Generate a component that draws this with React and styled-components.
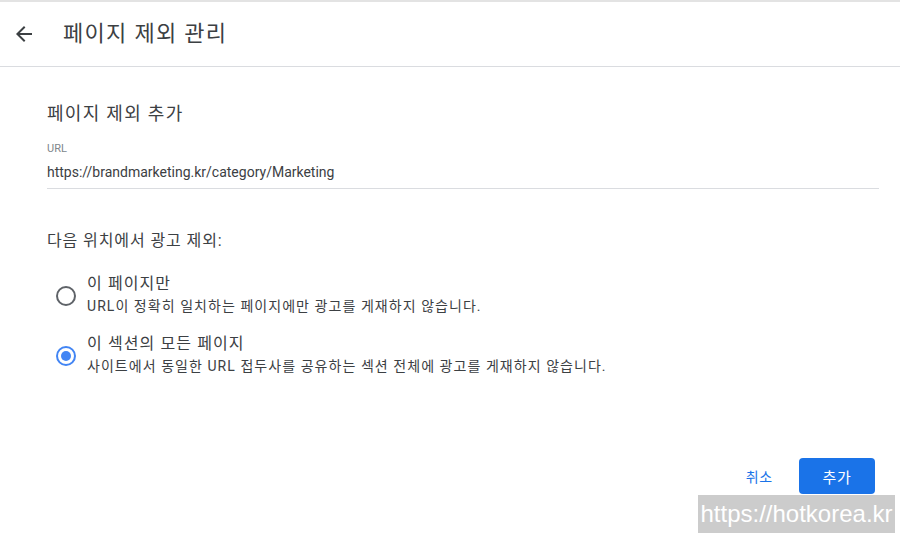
import React, { useState } from 'react'
import styled, { createGlobalStyle } from 'styled-components'

const GlobalStyle = createGlobalStyle`
  html, body {
    margin: 0;
    padding: 0;
    background: #ffffff;
  }
  body {
    font-family: Roboto, "Noto Sans CJK KR", sans-serif;
    color: #3c4043;
  }
`

const Page = styled.div`
  width: 900px;
  height: 536px;
  position: relative;
  overflow: hidden;
  border-top: 2px solid #e3e3e3;
  box-sizing: border-box;
`

const Header = styled.header`
  display: flex;
  align-items: center;
  height: 64px;
  border-bottom: 1px solid #dadce0;
  padding-left: 12px;
`

const BackButton = styled.button`
  display: flex;
  align-items: center;
  justify-content: center;
  width: 24px;
  height: 24px;
  padding: 0;
  border: none;
  background: none;
  color: #3c4043;
  margin-right: 27px;
`

const Title = styled.h1`
  margin: 0;
  font-size: 22px;
  font-weight: 400;
  line-height: 28px;
  color: #3c4043;
  letter-spacing: 1.3px;
`

const Body = styled.main`
  padding: 35px 21px 0 47px;
`

const SectionTitle = styled.h2`
  margin: 0 0 16px;
  font-size: 18px;
  font-weight: 400;
  line-height: 24px;
  color: #3c4043;
  letter-spacing: 1.3px;
`

const Field = styled.div`
  border-bottom: 1px solid #dadce0;
  padding-bottom: 6px;
`

const FieldLabel = styled.div`
  font-size: 11px;
  line-height: 14px;
  color: #80868b;
`

const FieldValue = styled.div`
  margin-top: 6px;
  font-size: 14px;
  line-height: 20px;
  color: #3c4043;
`

const Question = styled.div`
  margin-top: 42px;
  font-size: 16px;
  line-height: 20px;
  color: #3c4043;
  letter-spacing: 0.9px;
`

const Options = styled.div`
  display: flex;
  flex-direction: column;
  gap: 19px;
  margin-top: 23px;
  padding-left: 9px;
`

const Option = styled.label`
  display: flex;
  align-items: center;
  gap: 11px;
  cursor: pointer;
`

const Radio = styled.span`
  width: 16px;
  height: 16px;
  border-radius: 50%;
  border: 2px solid ${p => (p.$checked ? '#4285f4' : '#5f6368')};
  position: relative;
  flex: none;
  margin-top: 2px;

  &::after {
    content: '';
    position: absolute;
    inset: 3px;
    border-radius: 50%;
    background: #4285f4;
    display: ${p => (p.$checked ? 'block' : 'none')};
  }
`

const OptionText = styled.div`
  display: flex;
  flex-direction: column;
`

const OptionTitle = styled.span`
  font-size: 16px;
  line-height: 20px;
  color: #3c4043;
  letter-spacing: 1.1px;
`

const OptionDesc = styled.span`
  font-size: 14px;
  line-height: 18px;
  color: #3c4043;
  margin-top: 3px;
  letter-spacing: 1.05px;
`

const Actions = styled.div`
  display: flex;
  justify-content: flex-end;
  align-items: center;
  gap: 26px;
  margin-top: 83px;
  padding-right: 4px;
`

const TextButton = styled.button`
  border: none;
  background: none;
  padding: 0;
  font-family: inherit;
  font-size: 14px;
  letter-spacing: 0.8px;
  color: #1a73e8;
  cursor: pointer;
`

const PrimaryButton = styled.button`
  width: 76px;
  height: 36px;
  border: none;
  border-radius: 4px;
  background: #1a73e8;
  color: #ffffff;
  font-family: inherit;
  font-size: 15px;
  letter-spacing: 0.8px;
  cursor: pointer;
`

const Watermark = styled.div`
  position: absolute;
  left: 698px;
  top: 493px;
  width: 197px;
  height: 38px;
  background: #cccccc;
  color: #ffffff;
  font-family: "Liberation Sans", Arial, sans-serif;
  font-size: 24px;
  line-height: 37px;
  text-align: center;
  white-space: nowrap;
`

const options = [
  {
    id: 'page',
    title: '이 페이지만',
    desc: 'URL이 정확히 일치하는 페이지에만 광고를 게재하지 않습니다.',
  },
  {
    id: 'section',
    title: '이 섹션의 모든 페이지',
    desc: '사이트에서 동일한 URL 접두사를 공유하는 섹션 전체에 광고를 게재하지 않습니다.',
  },
]

const App = () => {
  const [selected, setSelected] = useState('section')

  return (
    <Page>
      <GlobalStyle />
      <Header>
        <BackButton aria-label="뒤로">
          <svg width="24" height="24" viewBox="0 0 24 24" fill="currentColor">
            <path d="M20 11H7.83l5.59-5.59L12 4l-8 8 8 8 1.41-1.41L7.83 13H20v-2z" />
          </svg>
        </BackButton>
        <Title>페이지 제외 관리</Title>
      </Header>
      <Body>
        <SectionTitle>페이지 제외 추가</SectionTitle>
        <Field>
          <FieldLabel>URL</FieldLabel>
          <FieldValue>https://brandmarketing.kr/category/Marketing</FieldValue>
        </Field>
        <Question>다음 위치에서 광고 제외:</Question>
        <Options>
          {options.map(o => (
            <Option key={o.id} onClick={() => setSelected(o.id)}>
              <Radio $checked={selected === o.id} />
              <OptionText>
                <OptionTitle>{o.title}</OptionTitle>
                <OptionDesc>{o.desc}</OptionDesc>
              </OptionText>
            </Option>
          ))}
        </Options>
        <Actions>
          <TextButton>취소</TextButton>
          <PrimaryButton>추가</PrimaryButton>
        </Actions>
      </Body>
      <Watermark>https://hotkorea.kr</Watermark>
    </Page>
  )
}

export default App
